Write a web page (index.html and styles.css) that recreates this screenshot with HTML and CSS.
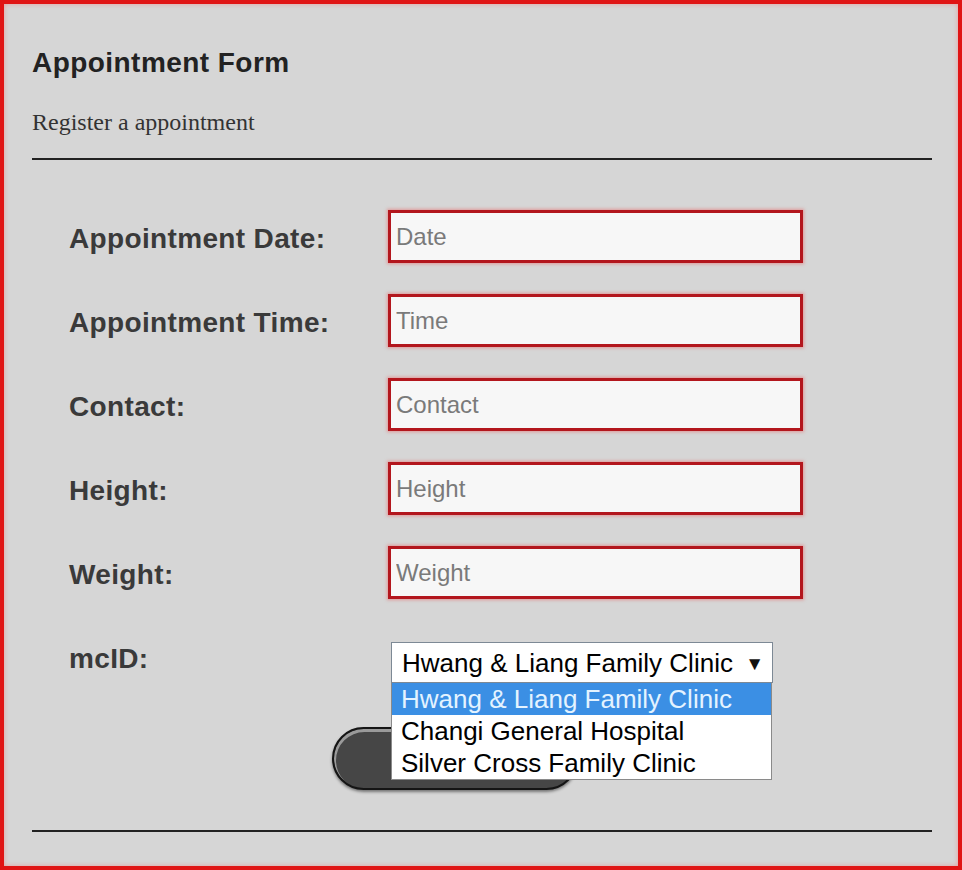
FILE: index.html
```html
<!DOCTYPE html>
<html lang="en">
<head>
    <meta charset="UTF-8">
    <meta name="viewport" content="width=device-width, initial-scale=1.0">
    <title>Appointment Form</title>
    <link rel="stylesheet" href="styles.css">
</head>
<body>

<div id="formFrame">
    <h1 class="formTitle">Appointment Form</h1>
    <p class="formSub">Register a appointment</p>
    <hr class="rule">

    <form class="apptForm" onsubmit="return false">
        <div class="fields">
            <div class="field">
                <label for="apptDate">Appointment Date:</label>
                <input type="text" id="apptDate" placeholder="Date">
            </div>
            <div class="field">
                <label for="apptTime">Appointment Time:</label>
                <input type="text" id="apptTime" placeholder="Time">
            </div>
            <div class="field">
                <label for="contact">Contact:</label>
                <input type="text" id="contact" placeholder="Contact">
            </div>
            <div class="field">
                <label for="height">Height:</label>
                <input type="text" id="height" placeholder="Height">
            </div>
            <div class="field">
                <label for="weight">Weight:</label>
                <input type="text" id="weight" placeholder="Weight">
            </div>
            <div class="field">
                <label>mcID:</label>
                <div class="pick">
                    <div class="pick-box">
                        <span>Hwang &amp; Liang Family Clinic</span>
                        <span class="pick-arrow">&#9660;</span>
                    </div>
                    <ul class="pick-list">
                        <li class="active">Hwang &amp; Liang Family Clinic</li>
                        <li>Changi General Hospital</li>
                        <li>Silver Cross Family Clinic</li>
                    </ul>
                </div>
            </div>
        </div>
        <div class="actions">
            <button class="sub-button" aria-label="Submit"></button>
        </div>
    </form>

    <hr class="rule rule-bottom">
</div>

</body>
</html>
```

FILE: styles.css
```css
        body {
            margin: 0;
            background: #fff;
        }

        #formFrame {
            box-sizing: border-box;
            width: 962px;
            height: 870px;
            padding: 43px 26px 0 28px;
            background-color: #d6d6d6;
            border: 4px solid #e01414;
            box-shadow: inset 0 0 5px rgba(240, 110, 110, 0.55);
        }

        .formTitle {
            margin: 0;
            font-family: "Liberation Sans", Arial, sans-serif;
            font-size: 28px;
            line-height: 32px;
            font-weight: bold;
            letter-spacing: 0.45px;
            color: #222;
        }

        .formSub {
            margin: 29px 0 0;
            font-family: "Liberation Serif", "Times New Roman", serif;
            font-size: 24px;
            line-height: 28px;
            color: #333;
        }

        .rule {
            margin: 22px 0 0;
            height: 2px;
            border: none;
            background-color: #222;
        }
		.rule-bottom {
			margin-top: 40px;
		}

        .apptForm {
            margin-top: 50px;
            padding-left: 37px;
            font-family: "Liberation Sans", Arial, sans-serif;
        }
		.fields {
			display: grid;
			grid-template-columns: 319px 415px;
			grid-auto-rows: 53px;
			row-gap: 31px;
		}

		.field {
			display: contents;
		}
		.field label {
			align-self: center;
			padding-top: 4px;
			font-size: 28px;
			font-weight: bold;
			letter-spacing: 0.35px;
			color: #3a3a3a;
		}
		.field input {
			box-sizing: border-box;
			width: 415px;
			height: 53px;
			margin: 0;
			padding: 0 0 0 5px;
			font-family: "Liberation Sans", Arial, sans-serif;
			font-size: 24px;
			color: #333;
			background-color: #f7f7f7;
			border: 3px solid #b3161d;
			box-shadow: 0 0 3px 1px rgba(235, 90, 90, 0.5);
			outline: none;
		}
		.field input::placeholder {
			color: #7a7a7a;
		}

		.pick {
			position: relative;
			align-self: end;
			margin-left: 3px;
			width: 382px;
		}
		.pick-box {
			box-sizing: border-box;
			display: flex;
			justify-content: space-between;
			align-items: center;
			height: 41px;
			padding: 2px 8px 0 10px;
			font-size: 26px;
			color: #000;
			background-color: #fff;
			border: 1px solid #7d8995;
		}
		.pick-arrow {
			font-size: 19px;
			color: #111;
		}
		.pick-list {
			position: absolute;
			top: 100%;
			left: 0;
			z-index: 2;
			box-sizing: border-box;
			width: 381px;
			margin: 0;
			padding: 0;
			list-style: none;
			background-color: #fff;
			border: 1px solid #8a8a8a;
			border-top: none;
		}
		.pick-list li {
			height: 32px;
			padding-left: 9px;
			font-size: 26px;
			line-height: 32px;
			color: #000;
			white-space: nowrap;
		}
		.pick-list li.active {
			background-color: #3b8fe4;
			color: #e4f3ff;
		}

		.actions {
			margin-top: 44px;
			padding-left: 263px;
			height: 63px;
		}
		.sub-button {
			display: block;
			width: 246px;
			height: 63px;
			background-color: #464646;
			border: 2px solid #151515;
			border-radius: 32px;
			box-shadow: inset 1px 2px 0 1px #9a9a9a, 0 2px 3px rgba(0, 0, 0, 0.45);
		}
```
